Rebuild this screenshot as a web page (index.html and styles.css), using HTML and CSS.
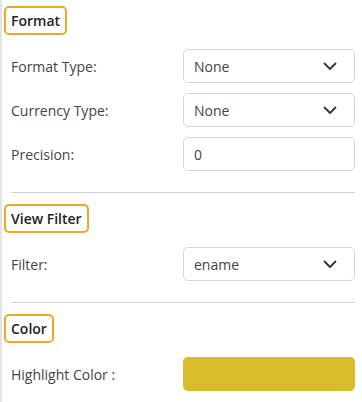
FILE: index.html
```html
<!DOCTYPE html>
<html lang="en">
<head>
    <meta charset="UTF-8">
    <meta name="viewport" content="width=device-width, initial-scale=1.0">
    <title>Properties</title>
    <link rel="stylesheet" href="styles.css">
</head>
<body>
    <div class="panel">
        <!-- Format -->
        <section class="group">
            <div class="badge">Format</div>
            <div class="rows">
                <div class="row">
                    <label>Format Type:</label>
                    <div class="select">
                        <span>None</span>
                        <svg class="chevron" width="14" height="9" viewBox="0 0 14 9"><path d="M1.5 1.5 L7 7 L12.5 1.5" fill="none" stroke="#333" stroke-width="1.8" stroke-linecap="round" stroke-linejoin="round"/></svg>
                    </div>
                </div>
                <div class="row">
                    <label>Currency Type:</label>
                    <div class="select">
                        <span>None</span>
                        <svg class="chevron" width="14" height="9" viewBox="0 0 14 9"><path d="M1.5 1.5 L7 7 L12.5 1.5" fill="none" stroke="#333" stroke-width="1.8" stroke-linecap="round" stroke-linejoin="round"/></svg>
                    </div>
                </div>
                <div class="row">
                    <label>Precision:</label>
                    <div class="select">
                        <span>0</span>
                    </div>
                </div>
            </div>
        </section>

        <hr class="divider">

        <!-- View Filter -->
        <section class="group">
            <div class="badge">View Filter</div>
            <div class="rows">
                <div class="row">
                    <label>Filter:</label>
                    <div class="select">
                        <span>ename</span>
                        <svg class="chevron" width="14" height="9" viewBox="0 0 14 9"><path d="M1.5 1.5 L7 7 L12.5 1.5" fill="none" stroke="#333" stroke-width="1.8" stroke-linecap="round" stroke-linejoin="round"/></svg>
                    </div>
                </div>
            </div>
        </section>

        <hr class="divider">

        <!-- Color -->
        <section class="group">
            <div class="badge">Color</div>
            <div class="rows">
                <div class="row">
                    <label>Highlight Color :</label>
                    <div class="swatch"></div>
                </div>
            </div>
        </section>
    </div>
</body>
</html>
```

FILE: styles.css
```css
* {
    margin: 0;
    padding: 0;
    box-sizing: border-box;
}

body {
    font-family: 'Open Sans', 'Lato', sans-serif;
    background-color: #fff;
    color: #444;
}

.panel {
    width: 362px;
    height: 402px;
    border-left: 2px solid #e4e4e4;
    padding: 6px 7px 0 2px;
}

.badge {
    display: inline-block;
    height: 29px;
    padding: 0 5px;
    border: 2px solid #eba928;
    border-radius: 5px;
    font-size: 14px;
    font-weight: 600;
    line-height: 25px;
    color: #222;
}

.rows {
    display: flex;
    flex-direction: column;
    gap: 10px;
    margin-top: 14px;
    padding-left: 7px;
}

.row {
    display: flex;
    align-items: center;
}

.row label {
    flex: 1;
    font-size: 14px;
    color: #444;
}

.select {
    width: 172px;
    height: 34px;
    border: 1px solid #d6d6d6;
    border-radius: 5px;
    display: flex;
    align-items: center;
    justify-content: space-between;
    padding: 0 17px 0 10px;
    font-size: 14px;
    color: #444;
}

.swatch {
    width: 172px;
    height: 34px;
    border-radius: 5px;
    background-color: #d8bc28;
}

.divider {
    border: none;
    border-top: 1px solid #cfcfcf;
    margin: 21px 0 11px 7px;
}
```
